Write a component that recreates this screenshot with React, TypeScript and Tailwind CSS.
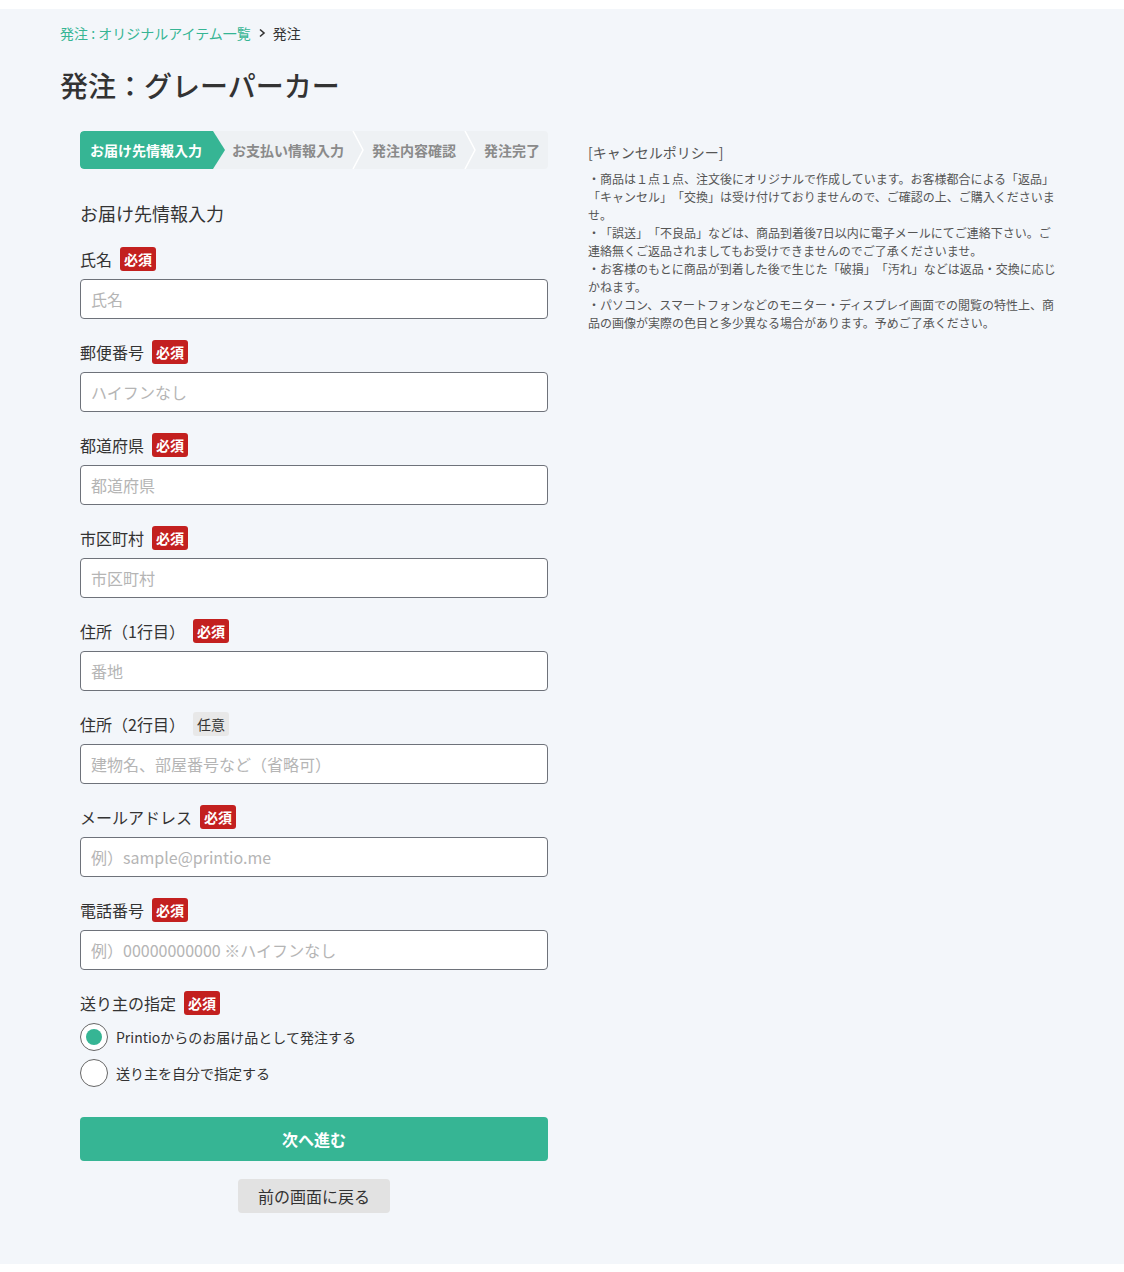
import React from 'react';

const fields = [
  { label: '氏名', placeholder: '氏名', required: true },
  { label: '郵便番号', placeholder: 'ハイフンなし', required: true },
  { label: '都道府県', placeholder: '都道府県', required: true },
  { label: '市区町村', placeholder: '市区町村', required: true },
  { label: '住所（1行目）', placeholder: '番地', required: true },
  { label: '住所（2行目）', placeholder: '建物名、部屋番号など（省略可）', required: false },
  { label: 'メールアドレス', placeholder: '例）sample@printio.me', required: true },
  { label: '電話番号', placeholder: '例）00000000000 ※ハイフンなし', required: true },
];

const steps = ['お支払い情報入力', '発注内容確認', '発注完了'];

const Required = () => (
  <span className="inline-flex h-[24px] items-center rounded-[3px] bg-[#c3201f] px-[4px] text-[14px] font-bold text-white">
    必須
  </span>
);

const Optional = () => (
  <span className="inline-flex h-[24px] items-center rounded-[3px] bg-[#e8e8e8] px-[4px] text-[14px] text-[#333]">
    任意
  </span>
);

const Chevron = () => (
  <svg width="12" height="38" viewBox="0 0 12 38" className="shrink-0">
    <polyline points="1,0 11,19 1,38" fill="none" stroke="#ffffff" strokeWidth="1.5" />
  </svg>
);

const App: React.FC = () => {
  return (
    <div className="min-h-[1272px] bg-white py-[9px] font-['Noto_Sans_CJK_JP','Noto_Sans',sans-serif] text-[#333]">
      <div className="min-h-[1255px] bg-[#f3f6fa] px-[60px] pt-[14px] pb-[50px]">
        {/* breadcrumb */}
        <div className="flex items-center gap-[6px] text-[14px] leading-[20px]">
          <span className="text-[#36b594]">発注 : オリジナルアイテム一覧</span>
          <svg width="10" height="10" viewBox="0 0 10 10">
            <polyline points="3,1.5 7,5 3,8.5" fill="none" stroke="#333" strokeWidth="1.6" />
          </svg>
          <span>発注</span>
        </div>

        <h1 className="mt-[24px] text-[28px] font-medium leading-[36px]">発注：グレーパーカー</h1>

        <div className="mt-[28px] flex gap-[40px] pl-[20px]">
          {/* form column */}
          <div className="w-[468px] shrink-0">
            <div className="flex h-[38px] items-center overflow-hidden rounded-[4px] bg-[#eef1f4] text-[14px] font-bold">
              <div className="flex h-full items-center rounded-l-[4px] bg-[#36b594] pr-[23px] pl-[10px] text-white [clip-path:polygon(0_0,calc(100%-12px)_0,100%_50%,calc(100%-12px)_100%,0_100%)]">
                お届け先情報入力
              </div>
              <span className="ml-[7px] text-[#8a8a8a]">{steps[0]}</span>
              <span className="mx-[8px]"><Chevron /></span>
              <span className="text-[#8a8a8a]">{steps[1]}</span>
              <span className="mx-[8px]"><Chevron /></span>
              <span className="text-[#8a8a8a]">{steps[2]}</span>
            </div>

            <h2 className="mt-[31px] text-[18px] leading-[26px]">お届け先情報入力</h2>

            <div className="mt-[21px] flex flex-col gap-[21px]">
              {fields.map((f) => (
                <div key={f.label}>
                  <div className="flex h-[24px] items-center gap-[8px] text-[16px]">
                    <span>{f.label}</span>
                    {f.required ? <Required /> : <Optional />}
                  </div>
                  <input
                    className="mt-[8px] h-[40px] w-full rounded-[4px] border border-[#6e727a] bg-white px-[10px] text-[16px] placeholder:text-[#b5b5b5]"
                    placeholder={f.placeholder}
                  />
                </div>
              ))}

              <div>
                <div className="flex h-[24px] items-center gap-[8px] text-[16px]">
                  <span>送り主の指定</span>
                  <Required />
                </div>
                <div className="mt-[8px] flex flex-col gap-[8px] text-[14px]">
                  <label className="flex items-center gap-[8px]">
                    <span className="flex h-[28px] w-[28px] items-center justify-center rounded-full border border-[#666] bg-white">
                      <span className="h-[16px] w-[16px] rounded-full bg-[#36b594]" />
                    </span>
                    Printioからのお届け品として発注する
                  </label>
                  <label className="flex items-center gap-[8px]">
                    <span className="h-[28px] w-[28px] rounded-full border border-[#666] bg-white" />
                    送り主を自分で指定する
                  </label>
                </div>
              </div>
            </div>

            <button className="mt-[30px] h-[44px] w-full rounded-[4px] bg-[#36b594] text-[16px] font-bold text-white">
              次へ進む
            </button>
            <div className="mt-[18px] flex justify-center">
              <button className="h-[34px] w-[152px] rounded-[4px] bg-[#e2e2e2] text-[16px] text-[#333]">
                前の画面に戻る
              </button>
            </div>
          </div>

          {/* policy column */}
          <div className="w-[474px] shrink-0 pt-[11px] text-[#555] [text-spacing-trim:space-all]">
            <p className="text-[14px] leading-[20px]">[キャンセルポリシー]</p>
            <div className="mt-[8px] text-[12px] leading-[18px]">
              <p>・商品は１点１点、注文後にオリジナルで作成しています。お客様都合による「返品」「キャンセル」「交換」は受け付けておりませんので、ご確認の上、ご購入くださいませ。</p>
              <p>・「誤送」「不良品」などは、商品到着後7日以内に電子メールにてご連絡下さい。ご連絡無くご返品されましてもお受けできませんのでご了承くださいませ。</p>
              <p>・お客様のもとに商品が到着した後で生じた「破損」「汚れ」などは返品・交換に応じかねます。</p>
              <p>・パソコン、スマートフォンなどのモニター・ディスプレイ画面での閲覧の特性上、商品の画像が実際の色目と多少異なる場合があります。予めご了承ください。</p>
            </div>
          </div>
        </div>
      </div>
    </div>
  );
};

export default App;
